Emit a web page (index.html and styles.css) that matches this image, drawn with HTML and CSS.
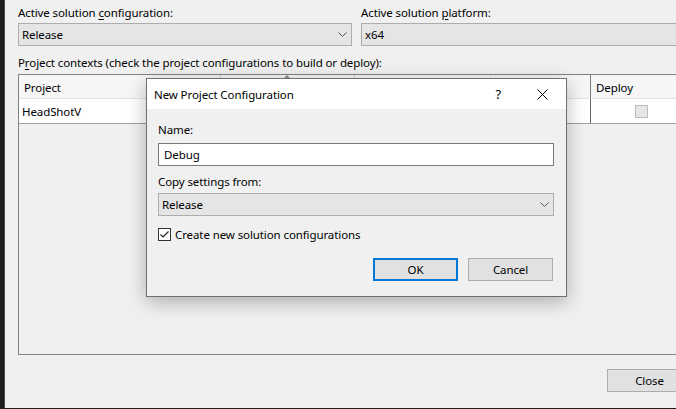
FILE: index.html
```html
<!DOCTYPE html>
<html>
<head>
<meta charset="utf-8">
<link rel="stylesheet" href="styles.css">
</head>
<body>
<div class="window">
  <div class="content">
    <div class="top">
      <div class="field">
        <div class="lbl">Active solution <u>c</u>onfiguration:</div>
        <div class="combo">
          <span>Release</span>
          <svg class="chev" width="9" height="5" viewBox="0 0 9 5"><path d="M0.5 0.5 L4.5 4.5 L8.5 0.5" fill="none" stroke="#555" stroke-width="1"/></svg>
        </div>
      </div>
      <div class="field">
        <div class="lbl">Active solution <u>p</u>latform:</div>
        <div class="combo"><span>x64</span></div>
      </div>
    </div>
    <div class="lbl ctx">P<u>r</u>oject contexts (check the project configurations to build or deploy):</div>
    <div class="grid">
      <div class="cell head">Project</div>
      <div class="cell head sorted"><span class="sortarrow"></span></div>
      <div class="cell head"></div>
      <div class="cell head"></div>
      <div class="cell head">Deploy</div>
      <div class="cell row">HeadShotV</div>
      <div class="cell row"></div>
      <div class="cell row"></div>
      <div class="cell row"></div>
      <div class="cell row boxcell"><span class="gbox"></span></div>
    </div>
    <div class="footer">
      <button class="btn close">Close</button>
    </div>
  </div>

  <div class="dialog">
    <div class="titlebar">
      <span class="title">New Project Configuration</span>
      <span class="help">?</span>
      <svg class="x" width="11" height="11" viewBox="0 0 11 11"><path d="M0.5 0.5 L10.5 10.5 M10.5 0.5 L0.5 10.5" stroke="#000" stroke-width="1"/></svg>
    </div>
    <div class="dbody">
      <div class="lbl">Name:</div>
      <div class="input">Debug</div>
      <div class="lbl mt">Copy settings from:</div>
      <div class="combo dcombo">
        <span>Release</span>
        <svg class="chev" width="9" height="5" viewBox="0 0 9 5"><path d="M0.5 0.5 L4.5 4.5 L8.5 0.5" fill="none" stroke="#555" stroke-width="1"/></svg>
      </div>
      <div class="check">
        <span class="cbox"><svg width="11" height="11" viewBox="0 0 11 11"><path d="M1.5 5.5 L4 8 L9.5 2.5" fill="none" stroke="#222" stroke-width="1.2"/></svg></span>
        <span>Create new solution configurations</span>
      </div>
      <div class="buttons">
        <button class="btn ok">OK</button>
        <button class="btn">Cancel</button>
      </div>
    </div>
  </div>
</div>
</body>
</html>
```

FILE: styles.css
```css
* { box-sizing: border-box; }
html, body { margin: 0; padding: 0; }
body {
  width: 676px;
  height: 409px;
  overflow: hidden;
  background: #1e1e1e;
  font-family: "Noto Sans", "Segoe UI", sans-serif;
  font-size: 11.5px;
  letter-spacing: -0.1px;
  color: #000;
}
u { text-decoration: underline; text-underline-offset: 2px; }
.window {
  position: relative;
  margin-left: 4px;
  width: 760px;
  height: 408px;
  background: #f0f0f0;
  border-left: 1px solid #4a4a4a;
  overflow: hidden;
}
.content {
  width: 690px;
  padding: 5px 0 0 13px;
}
.lbl { line-height: 16px; height: 16px; white-space: nowrap; }
.top {
  display: grid;
  grid-template-columns: 334px 1fr;
  column-gap: 9px;
}
.field .lbl { margin-bottom: 2px; }
.combo {
  height: 23px;
  background: #e5e5e5;
  border: 1px solid #adadad;
  display: flex;
  align-items: center;
  padding-left: 3px;
  position: relative;
}
.combo .chev { position: absolute; right: 4px; top: 8px; }
.ctx { margin-top: 9px; margin-bottom: 3px; }
.grid {
  height: 281px;
  border: 1px solid #828282;
  background: #f0f0f0;
  display: grid;
  grid-template-columns: 202px 134px 136px 100px 1fr;
  grid-template-rows: 24px 25px;
  align-content: start;
}
.cell {
  border-right: 1px solid #e3e3e3;
  display: flex;
  align-items: center;
  white-space: nowrap;
}
.head {
  background: #f6f6f6;
  border-bottom: 1px solid #e3e3e3;
  padding-left: 5px;
  padding-top: 1px;
  position: relative;
}
.head.sorted { border-right-color: #c4d3e2; border-left: 1px solid #c4d3e2; margin-left: -1px; }
.sortarrow {
  position: absolute;
  left: 63px;
  top: 0;
  width: 0; height: 0;
  border-left: 3px solid transparent;
  border-right: 3px solid transparent;
  border-bottom: 3px solid #8c8c8c;
}
.head:nth-child(4) { border-right-color: #7a7a7a; }
.row {
  background: #fff;
  border-bottom: 1px solid #a0a0a0;
  padding-left: 3px;
}
.row:nth-child(9) { border-right-color: #646464; }
.boxcell { padding-left: 44px; }
.gbox {
  width: 13px; height: 13px;
  background: #e6e6e6;
  border: 1px solid #bcbcbc;
}
.footer {
  display: flex;
  justify-content: flex-end;
  margin-top: 14px;
  padding-right: 3px;
}
.btn {
  font-family: inherit;
  font-size: 11.5px;
  letter-spacing: -0.1px;
  color: #000;
  height: 23px;
  width: 85px;
  background: #e1e1e1;
  border: 1px solid #adadad;
  padding: 0;
  margin: 0;
}
.close { width: 85px; }

.dialog {
  position: absolute;
  left: 141px;
  top: 78px;
  width: 421px;
  height: 219px;
  background: #f0f0f0;
  border: 1px solid #6f6f6f;
  box-shadow: 0 5px 18px rgba(0,0,0,0.28);
  display: flex;
  flex-direction: column;
}
.titlebar {
  height: 30px;
  background: #fff;
  display: flex;
  align-items: center;
  padding-left: 7px;
  flex: none;
}
.title { flex: 1; }
.help { margin-right: 36px; font-size: 13px; }
.x { margin-right: 18px; }
.dbody {
  padding: 13px 12px 0 11px;
}
.input {
  margin-top: 5px;
  height: 23px;
  background: #fff;
  border: 1px solid #7a7a7a;
  display: flex;
  align-items: center;
  padding-left: 5px;
}
.mt { margin-top: 8px; }
.dcombo { margin-top: 3px; }
.check {
  margin-top: 12px;
  display: flex;
  align-items: center;
  height: 13px;
}
.cbox {
  width: 13px; height: 13px;
  border: 1px solid #333;
  background: #fff;
  margin-right: 4px;
  display: flex;
  align-items: center;
  justify-content: center;
}
.cbox svg { display: block; }
.buttons {
  margin-top: 17px;
  display: flex;
  justify-content: flex-end;
  gap: 10px;
  padding-right: 1px;
}
.ok { border: 2px solid #0078d7; }
```
